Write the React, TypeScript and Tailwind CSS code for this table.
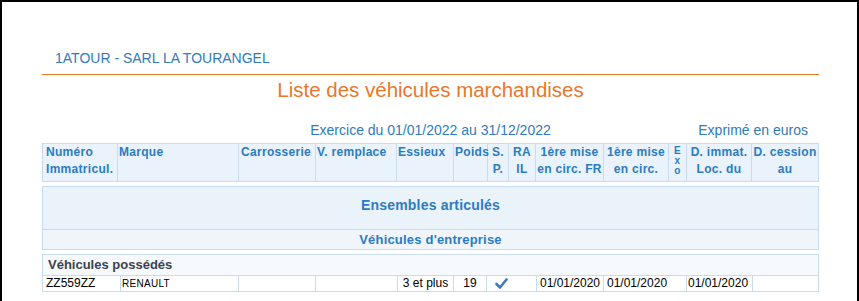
const headerCols = [
  { w: "w-[75px]", lines: ["Numéro", "Immatricul."], align: "text-left pl-[3px]" },
  { w: "w-[121px]", lines: ["Marque"], align: "text-left pl-[1px]" },
  { w: "w-[77px]", lines: ["Carrosserie"], align: "text-left pl-[2px]" },
  { w: "w-[81px]", lines: ["V. remplace"], align: "text-left pl-[1px]" },
  { w: "w-[57px]", lines: ["Essieux"], align: "text-left pl-[1px]" },
  { w: "w-[34px]", lines: ["Poids"], align: "text-left pl-[1px]" },
  { w: "w-[21px]", lines: ["S.", "P."], align: "text-center" },
  { w: "w-[27px]", lines: ["RA", "IL"], align: "text-center" },
  { w: "w-[68px]", lines: ["1ère mise", "en circ. FR"], align: "text-center" },
  { w: "w-[65px]", lines: ["1ère mise", "en circ."], align: "text-center" },
  { w: "w-[18px]", lines: [], align: "text-center" },
  { w: "w-[65px]", lines: ["D. immat.", "Loc. du"], align: "text-center" },
  { w: "w-[67px]", lines: ["D. cession", "au"], align: "text-center" },
];

function CheckIcon() {
  return (
    <svg width="13" height="11" viewBox="0 0 13 11" fill="none">
      <path d="M1.5 6 L5 9.5 L11.5 1.5" stroke="#3f7bbd" strokeWidth="2.6" strokeLinecap="round" strokeLinejoin="round" />
    </svg>
  );
}

export default function App() {
  return (
    <div className="w-[859px] h-[301px] bg-white border-l-2 border-t-2 border-r-2 border-black pl-[40px] font-['Liberation_Sans',Arial,sans-serif] overflow-hidden">
      <div className="w-[777px]">
        {/* company */}
        <div className="mt-[48px] pl-[13px] text-[14px] leading-[16px] text-[#2f7bbb]">1ATOUR - SARL LA TOURANGEL</div>
        <div className="mt-[8px] h-px bg-[#e8772a]" />
        <div className="mt-[3px] text-center text-[20.5px] leading-[24px] text-[#e8772a]">Liste des véhicules marchandises</div>

        <div className="mt-[20px] relative h-[16px] text-[14px] leading-[16px] text-[#2f7bbb]">
          <div className="text-center">Exercice du 01/01/2022 au 31/12/2022</div>
          <div className="absolute right-[11px] top-0">Exprimé en euros</div>
        </div>

        {/* header */}
        <div className="mt-[5px] flex h-[39px] border-l border-t border-b border-[#c8dcef] bg-[#eaf2fb] text-[12px] leading-[17px] font-bold tracking-[0.3px] text-[#2b7cc0]">
          {headerCols.map((c, i) => (
            <div key={i} className={`${c.w} shrink-0 border-r border-[#c8dcef] ${c.align}`}>
              {i === 10 ? (
                <div className="flex flex-col items-center text-[10px] leading-[10px] pt-[2px]">
                  <span>E</span>
                  <span>x</span>
                  <span>o</span>
                </div>
              ) : (
                c.lines.map((l) => (
                  <div key={l} className="whitespace-nowrap">{l}</div>
                ))
              )}
            </div>
          ))}
        </div>

        {/* group block */}
        <div className="mt-[4px] border border-[#c8dcef] bg-[#eaf2fa]">
          <div className="h-[42px] pb-[6px] flex items-center justify-center text-[14px] font-bold tracking-[0.2px] text-[#2b7cc0]">Ensembles articulés</div>
          <div className="h-[20px] border-t border-[#c8dcef] bg-[#eff5fb] flex items-center justify-center text-[13px] font-bold tracking-[0.2px] text-[#2b7cc0]">Véhicules d'entreprise</div>
        </div>

        {/* owned vehicles */}
        <div className="mt-[4px] border border-[#c8dcef]">
          <div className="h-[20px] bg-[#f6f9fd] flex items-center pl-[5px] text-[13px] font-bold text-[#3a424e]">Véhicules possédés</div>
          <div className="flex h-[16px] border-t border-[#c8dcef] text-[12px] leading-[15px] text-black">
            <div className="w-[78px] shrink-0 border-r border-[#c8dcef] pl-[3px]">ZZ559ZZ</div>
            <div className="w-[118px] shrink-0 border-r border-[#c8dcef] pl-[1px] text-[10px] tracking-[0.3px]">RENAULT</div>
            <div className="w-[77px] shrink-0 border-r border-[#c8dcef]" />
            <div className="w-[82px] shrink-0 border-r border-[#c8dcef]" />
            <div className="w-[56px] shrink-0 border-r border-[#c8dcef] text-center">3 et plus</div>
            <div className="w-[33px] shrink-0 border-r border-[#c8dcef] text-center">19</div>
            <div className="w-[50px] shrink-0 border-r border-[#c8dcef] pl-[8px] pt-[2px]">
              <CheckIcon />
            </div>
            <div className="w-[67px] shrink-0 border-r border-[#c8dcef] text-center">01/01/2020</div>
            <div className="w-[83px] shrink-0 border-r border-[#c8dcef] pl-[3px]">01/01/2020</div>
            <div className="w-[66px] shrink-0 border-r border-[#c8dcef] pl-[1px]">01/01/2020</div>
            <div className="flex-1" />
          </div>
        </div>
      </div>
    </div>
  );
}
